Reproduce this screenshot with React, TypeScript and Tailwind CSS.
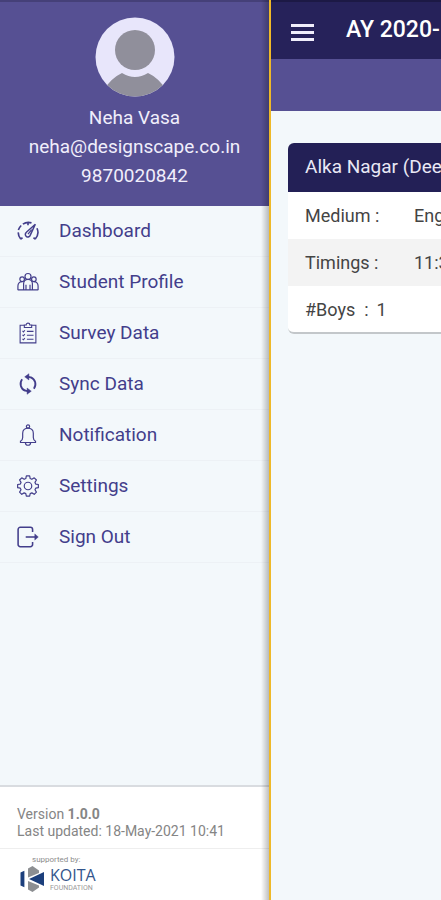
import type { ReactNode } from 'react';

type MenuItem = { label: string; icon: ReactNode };

const iconProps = {
    viewBox: '0 0 24 24',
    fill: 'none',
    stroke: 'currentColor',
    strokeWidth: 1.3,
    'aria-hidden': true,
    className: 'h-[22px] w-[22px] shrink-0',
};

const menu: MenuItem[] = [
    {
        label: 'Dashboard',
        icon: (
            <svg {...iconProps} strokeWidth={1.8}>
                <path d="M4.2 20.8A10.8 10.8 0 0 1 1.3 13.5M1.5 11A10.8 10.8 0 0 1 4.6 6M6.4 4.5A10.8 10.8 0 0 1 15.8 3.1M21.8 9A10.8 10.8 0 0 1 19.8 20.8M4.2 20.8l1.8-1.6M19.8 20.8l-1.8-1.6M12 3v2.6" />
                <path d="M10.2 13.4L20 4.6 14.6 16.2A2.8 2.8 0 1 1 10.2 13.4z" strokeWidth="1.6" />
                <path d="M12 15.4l4-5" strokeWidth="1.4" />
            </svg>
        ),
    },
    {
        label: 'Student Profile',
        icon: (
            <svg {...iconProps}>
                <circle cx="12" cy="6" r="3.3" />
                <circle cx="5.6" cy="9" r="2.5" />
                <circle cx="18.4" cy="9" r="2.5" />
                <path d="M7.2 20.6v-6.6a4.8 4.8 0 0 1 9.6 0v6.6M1 20.6v-4.2c0-3 1.8-4.8 4.6-4.8M23 20.6v-4.2c0-3-1.8-4.8-4.6-4.8M.8 20.6h22.4M9.8 15v5.6M14.2 15v5.6" />
            </svg>
        ),
    },
    {
        label: 'Survey Data',
        icon: (
            <svg {...iconProps} strokeWidth={1.2}>
                <path d="M8 3.6H3.4v19.2h17.2V3.6H16" />
                <path d="M8 6V3.2h2a2 2 0 0 1 4 0h2V6z" />
                <path d="M6 9.8l1 1 1.6-1.8M6 14l1 1 1.6-1.8M6 18.4l1 1 1.6-1.8M10.8 10.2H18M10.8 14.4H18M10.8 18.8H18" />
            </svg>
        ),
    },
    {
        label: 'Sync Data',
        icon: (
            <svg {...iconProps} strokeWidth={2}>
                <path d="M5.6 6.8a8.2 8.2 0 0 0 3.2 12.5M18.4 17.2a8.2 8.2 0 0 0-3.2-12.5M12 4.2a8 8 0 0 1 3.6.8M12 19.8a8 8 0 0 1-3.6-.8" />
                <path d="M13 .8v6.8L8.4 4.2zM11 16.4v6.8l4.6-3.4z" fill="currentColor" strokeWidth="0.5" />
            </svg>
        ),
    },
    {
        label: 'Notification',
        icon: (
            <svg {...iconProps}>
                <circle cx="12" cy="2.7" r="1.8" />
                <path d="M3.8 20.2v-1.4c1.8-.7 2.4-2 2.4-4V10c0-3.4 2.5-5.6 5.8-5.6s5.8 2.2 5.8 5.6v4.8c0 2 .6 3.3 2.4 4v1.4zM9.2 20.4a2.8 2.8 0 0 0 5.6 0" />
            </svg>
        ),
    },
    {
        label: 'Settings',
        icon: (
            <svg {...iconProps} strokeLinejoin="round">
                <circle cx="12" cy="12" r="4.1" />
                <path d="M10.2 1h3.6l.6 2.9 1.8.8 2.6-1.6 2.4 2.4-1.6 2.6.8 1.8 2.9.5v3.4l-2.9.6-.8 1.7 1.6 2.6-2.4 2.4-2.6-1.6-1.8.8-.6 2.7h-3.6l-.6-2.7-1.8-.8-2.6 1.6-2.4-2.4 1.6-2.6-.8-1.7-2.9-.6v-3.4l2.9-.5.8-1.8-1.6-2.6 2.4-2.4 2.6 1.6 1.8-.8z" />
            </svg>
        ),
    },
    {
        label: 'Sign Out',
        icon: (
            <svg {...iconProps} strokeWidth={1.7}>
                <path d="M17 6.6V3.8A2.4 2.4 0 0 0 14.6 1.4H3.6a2.4 2.4 0 0 0-2.4 2.4v16.4a2.4 2.4 0 0 0 2.4 2.4h11A2.4 2.4 0 0 0 17 20.2v-2.8" />
                <path d="M9.5 12h11" />
                <path d="M19.4 8.6v6.8l3.8-3.4z" fill="currentColor" strokeWidth="0.5" />
            </svg>
        ),
    },
];

const rows = [
    { label: 'Medium :', value: 'Eng' },
    { label: 'Timings :', value: '11:3' },
];

function Avatar() {
    return (
        <svg viewBox="0 0 80 80" role="img" aria-label="Neha Vasa" className="h-20 w-20">
            <clipPath id="avatar-clip">
                <circle cx="40" cy="40" r="39.5" />
            </clipPath>
            <g clipPath="url(#avatar-clip)">
                <rect width="80" height="80" fill="#e8e6fb" />
                <circle cx="40" cy="33" r="20" fill="#908f9b" />
                <path d="M8 74Q16 61 27 56Q40 64 53 56Q64 61 72 74V80H8z" fill="#908f9b" />
            </g>
        </svg>
    );
}

function KoitaLogo() {
    return (
        <svg viewBox="0 0 24 27" aria-hidden="true" className="h-7 w-6">
            <path d="M.5 7L4.4 5.2v16.6L.5 20z" fill="#1c3f7c" />
            <path d="M8 3L12.5.5l6.5 4.5v2.5L8 12zM8 15.5L19 20v2l-6.5 4.5L8 24z" fill="#8d8f92" />
            <path d="M9 13.5L24 6.5v14z" fill="#1c3f7c" />
        </svg>
    );
}

function Drawer() {
    return (
        <aside className="relative flex w-[271px] shrink-0 flex-col border-r-2 border-[#efb928] bg-[#f3f8fb]">
            <div className="flex flex-col items-center border-t-2 border-[#454078] bg-[#565093] pt-[15px] pb-4 text-[19px] leading-[29px] text-[#f0eefb]">
                <Avatar />
                <p className="mt-1.5">Neha Vasa</p>
                <p>neha@designscape.co.in</p>
                <p>9870020842</p>
            </div>

            <nav className="flex-1">
                <ul>
                    {menu.map((item) => (
                        <li key={item.label} className="border-b border-[#edf1f5]">
                            <a href="#" className="flex h-[50px] items-center gap-5 pl-[17px] text-[19px] text-[#433e8b]">
                                {item.icon}
                                {item.label}
                            </a>
                        </li>
                    ))}
                </ul>
            </nav>

            <footer className="border-t-2 border-[#d9dce0] bg-white">
                <div className="border-b border-[#eeeeee] px-[17px] pt-[19px] pb-2 text-[14px] leading-[17px] text-[#858585]">
                    <p>
                        Version <b>1.0.0</b>
                    </p>
                    <p>Last updated: 18-May-2021 10:41</p>
                </div>
                <div className="px-5 pt-1.5 pb-[7px]">
                    <p className="px-3 text-[8px] leading-[10px] text-[#8c8c8c]">supported by:</p>
                    <div className="flex items-center gap-1.5">
                        <KoitaLogo />
                        <div>
                            <p className="font-['Open_Sans'] text-[16px] leading-[18px] text-[#33558c]">KOITA</p>
                            <p className="text-[7px] leading-2 text-[#999999]">FOUNDATION</p>
                        </div>
                    </div>
                </div>
            </footer>

            <div className="pointer-events-none absolute inset-y-0 right-0 w-2 bg-linear-to-r from-transparent to-black/25" />
        </aside>
    );
}

export default function App() {
    return (
        <div className="flex min-h-screen overflow-hidden bg-[#f3f8fb] font-[Roboto,sans-serif]">
            <Drawer />
            <main className="min-w-0 flex-1 overflow-hidden whitespace-nowrap">
                <header className="flex h-[59px] items-center gap-8 border-t-2 border-[#1c1945] bg-[#26225a] pl-5">
                    <button aria-label="Menu" className="mt-1 flex w-[23px] shrink-0 flex-col gap-1">
                        <span className="h-[3px] w-full bg-[#f0eefb]" />
                        <span className="h-[3px] w-full bg-[#f0eefb]" />
                        <span className="h-[3px] w-full bg-[#f0eefb]" />
                    </button>
                    <h1 className="text-[23px] font-medium text-white">AY 2020-</h1>
                </header>
                <div className="h-[52px] bg-[#565093]" />

                <section className="mt-8 ml-[17px] overflow-hidden rounded-l-md border-b-2 border-[#c3c7ca] bg-white text-[18px] text-[#444444]">
                    <h2 className="flex h-[49px] items-center bg-[#232056] pl-[17px] text-[19px] text-[#e9e8f5]">Alka Nagar (Dee</h2>
                    <dl>
                        {rows.map((row) => (
                            <div key={row.label} className="flex h-[47px] items-center pl-[17px] even:bg-[#f3f3f3]">
                                <dt className="w-[109px] shrink-0">{row.label}</dt>
                                <dd>{row.value}</dd>
                            </div>
                        ))}
                        <div className="flex h-[46px] items-center gap-2 pl-[17px]">
                            <dt>#Boys &nbsp;:</dt>
                            <dd>1</dd>
                        </div>
                    </dl>
                </section>
            </main>
        </div>
    );
}
